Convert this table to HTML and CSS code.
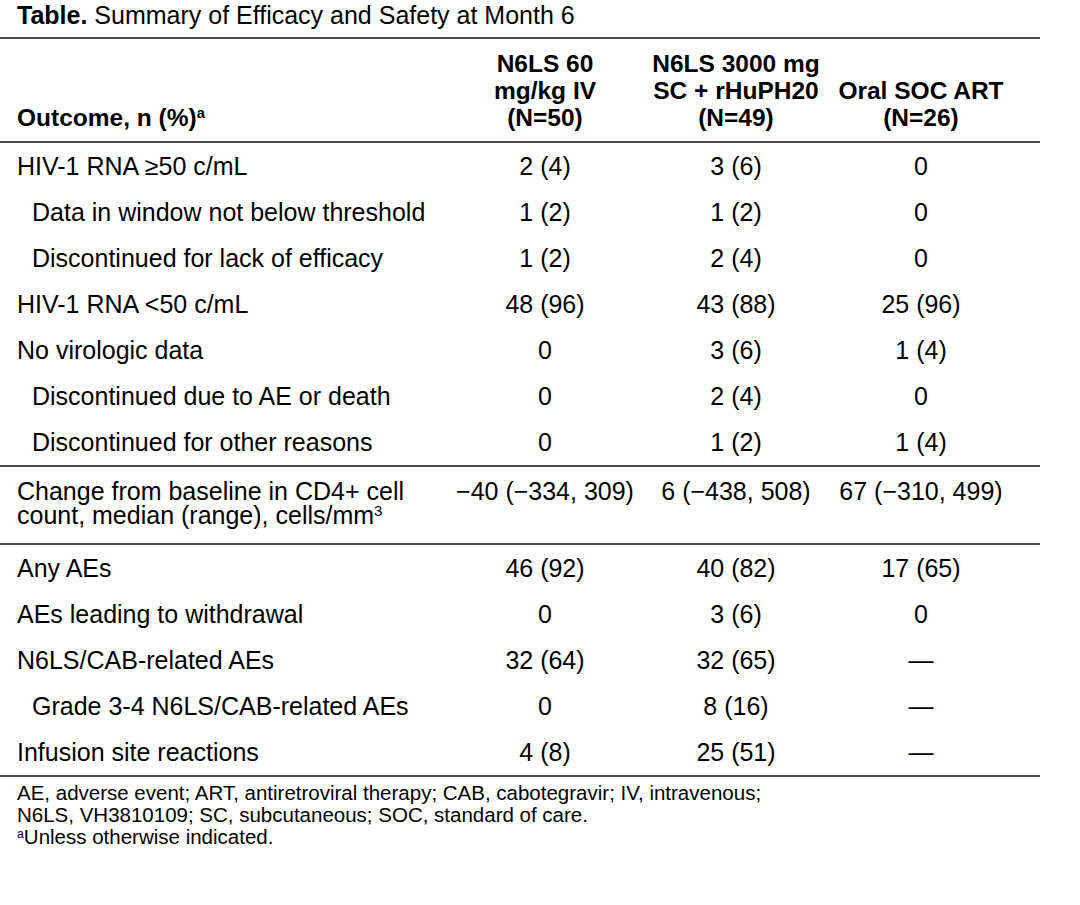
FILE: index.html
```html
<!DOCTYPE html>
<html lang="en">
<head>
<meta charset="utf-8">
<title>Summary of Efficacy and Safety at Month 6</title>
<link rel="stylesheet" href="styles.css">
</head>
<body>
<div class="figure">
  <p class="caption"><b>Table.</b> Summary of Efficacy and Safety at Month 6</p>
  <table class="summary">
    <colgroup>
      <col class="c1"><col class="c2"><col class="c3"><col class="c4">
    </colgroup>
    <thead>
      <tr>
        <th class="label">Outcome, n (%)<sup>a</sup></th>
        <th>N6LS 60<br>mg/kg IV<br>(N=50)</th>
        <th>N6LS 3000 mg<br>SC + rHuPH20<br>(N=49)</th>
        <th class="last">Oral SOC ART<br>(N=26)</th>
      </tr>
    </thead>
    <tbody>
      <tr><td class="label">HIV-1 RNA ≥50 c/mL</td><td>2 (4)</td><td>3 (6)</td><td class="last">0</td></tr>
      <tr><td class="label sub">Data in window not below threshold</td><td>1 (2)</td><td>1 (2)</td><td class="last">0</td></tr>
      <tr><td class="label sub">Discontinued for lack of efficacy</td><td>1 (2)</td><td>2 (4)</td><td class="last">0</td></tr>
      <tr><td class="label">HIV-1 RNA &lt;50 c/mL</td><td>48 (96)</td><td>43 (88)</td><td class="last">25 (96)</td></tr>
      <tr><td class="label">No virologic data</td><td>0</td><td>3 (6)</td><td class="last">1 (4)</td></tr>
      <tr><td class="label sub">Discontinued due to AE or death</td><td>0</td><td>2 (4)</td><td class="last">0</td></tr>
      <tr><td class="label sub">Discontinued for other reasons</td><td>0</td><td>1 (2)</td><td class="last">1 (4)</td></tr>
    </tbody>
    <tbody class="section">
      <tr class="tall"><td class="label">Change from baseline in CD4+ cell<br>count, median (range), cells/mm<sup>3</sup></td><td>−40 (−334, 309)</td><td>6 (−438, 508)</td><td class="last">67 (−310, 499)</td></tr>
    </tbody>
    <tbody class="section">
      <tr><td class="label">Any AEs</td><td>46 (92)</td><td>40 (82)</td><td class="last">17 (65)</td></tr>
      <tr><td class="label">AEs leading to withdrawal</td><td>0</td><td>3 (6)</td><td class="last">0</td></tr>
      <tr><td class="label">N6LS/CAB-related AEs</td><td>32 (64)</td><td>32 (65)</td><td class="last">—</td></tr>
      <tr><td class="label sub">Grade 3-4 N6LS/CAB-related AEs</td><td>0</td><td>8 (16)</td><td class="last">—</td></tr>
      <tr><td class="label">Infusion site reactions</td><td>4 (8)</td><td>25 (51)</td><td class="last">—</td></tr>
    </tbody>
  </table>
  <div class="notes">
    <p>AE, adverse event; ART, antiretroviral therapy; CAB, cabotegravir; IV, intravenous;<br>N6LS, VH3810109; SC, subcutaneous; SOC, standard of care.</p>
    <p><sup>a</sup>Unless otherwise indicated.</p>
  </div>
</div>
</body>
</html>
```

FILE: styles.css
```css
html, body {
  margin: 0;
  padding: 0;
  background: #ffffff;
}

body {
  font-family: "Liberation Sans", Arial, sans-serif;
  color: #000000;
}

.figure {
  width: 1040px;
}

.caption {
  margin: 0;
  padding: 1px 0 0 17px;
  font-size: 25px;
  line-height: 28px;
  height: 36px;
}

.summary {
  width: 1040px;
  border-collapse: collapse;
  table-layout: fixed;
  border-top: 2px solid #4a4a4a;
  border-bottom: 2px solid #4a4a4a;
  font-size: 25px;
}

.c1 { width: 440px; }
.c2 { width: 210px; }
.c3 { width: 172px; }
.c4 { width: 218px; }

.summary th {
  font-weight: bold;
  font-size: 24.5px;
  text-align: center;
  vertical-align: bottom;
  line-height: 27px;
  padding: 11px 0 10px 0;
  border-bottom: 2px solid #4a4a4a;
  white-space: nowrap;
}

.summary td {
  text-align: center;
  vertical-align: top;
  line-height: 24px;
  padding: 11px 0 11px 0;
  white-space: nowrap;
}

.summary .label {
  text-align: left;
  padding-left: 17px;
}

.summary .sub {
  padding-left: 32px;
}

.summary .last {
  padding-right: 20px;
}

.section {
  border-top: 2px solid #4a4a4a;
}

.summary tr.tall td {
  padding-top: 12px;
  padding-bottom: 16px;
}

sup {
  font-size: 0.6em;
  line-height: 0;
  vertical-align: 0.55em;
}

.notes {
  padding: 5px 0 0 17px;
  font-size: 20.5px;
  line-height: 22px;
}

.notes p {
  margin: 0;
}

.notes sup {
  font-size: 0.6em;
  vertical-align: 0.5em;
}
```
